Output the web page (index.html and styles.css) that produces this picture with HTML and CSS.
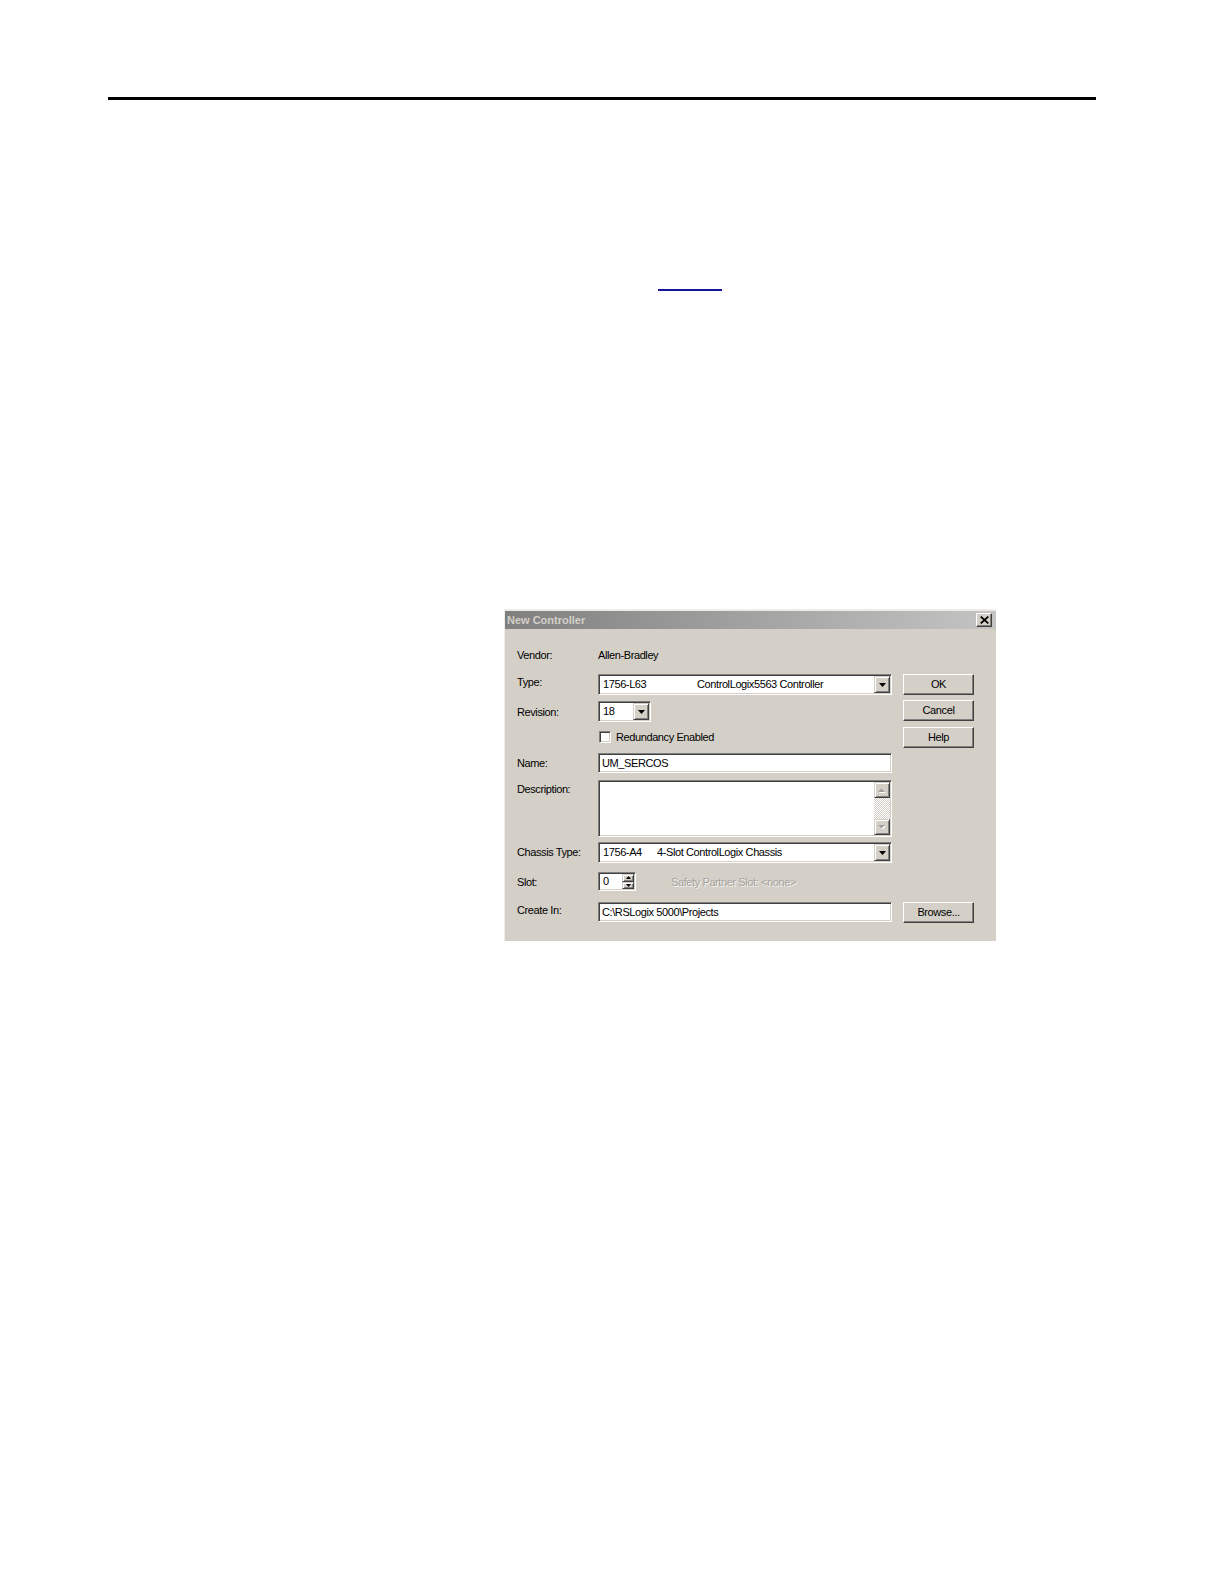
FILE: index.html
```html
<!DOCTYPE html>
<html lang="en">
<head>
<meta charset="utf-8">
<title>New Controller</title>
<link rel="stylesheet" href="styles.css">
</head>
<body>
<div class="page">
  <div class="rule"></div>
  <div class="link-line"></div>
  <div class="dialog">
    <div class="titlebar">
      <span class="title">New Controller</span>
      <span class="close btn-bevel"><svg width="9" height="8" viewBox="0 0 9 8"><path d="M0.7 0.6L8.3 7.4M8.3 0.6L0.7 7.4" stroke="#000" stroke-width="1.8" fill="none"/></svg></span>
    </div>
    <div class="form">
      <div class="label r1">Vendor:</div>
      <div class="value r1">Allen-Bradley</div>

      <div class="label r2 lbl-type">Type:</div>
      <div class="combo sunken r2">
        <span class="ctext"><span class="cat cat-type">1756-L63</span>ControlLogix5563 Controller</span>
        <span class="dd raised"><svg width="7" height="4" viewBox="0 0 7 4"><polygon points="0,0 7,0 3.5,4" fill="#000"/></svg></span>
      </div>
      <div class="btn-stack">
        <div class="btn btn-bevel">OK</div>
        <div class="btn btn-bevel btn-cancel">Cancel</div>
        <div class="btn btn-bevel btn-help">Help</div>
      </div>

      <div class="label r3 lbl-rev">Revision:</div>
      <div class="combo combo-small sunken r3">
        <span class="ctext">18</span>
        <span class="dd raised"><svg width="7" height="4" viewBox="0 0 7 4"><polygon points="0,0 7,0 3.5,4" fill="#000"/></svg></span>
      </div>

      <div class="check-row r4">
        <span class="checkbox"></span>
        <span class="check-label">Redundancy Enabled</span>
      </div>

      <div class="label r5">Name:</div>
      <div class="field sunken r5">UM_SERCOS</div>

      <div class="label r6 lbl-desc">Description:</div>
      <div class="textarea sunken r6">
        <div class="scrollbar">
          <span class="sb-btn raised"><svg width="8" height="5" viewBox="0 0 8 5"><polygon points="1,5 8,5 4.5,1.5" fill="#fff"/><polygon points="0,4 7,4 3.5,0.5" fill="#a0a0a0"/></svg></span>
          <span class="sb-track"></span>
          <span class="sb-btn raised"><svg width="8" height="5" viewBox="0 0 8 5"><polygon points="1,1 8,1 4.5,4.5" fill="#fff"/><polygon points="0,0 7,0 3.5,3.5" fill="#a0a0a0"/></svg></span>
        </div>
      </div>

      <div class="label r7 lbl-chassis">Chassis Type:</div>
      <div class="combo sunken r7">
        <span class="ctext"><span class="cat cat-chassis">1756-A4</span>4-Slot ControlLogix Chassis</span>
        <span class="dd raised"><svg width="7" height="4" viewBox="0 0 7 4"><polygon points="0,0 7,0 3.5,4" fill="#000"/></svg></span>
      </div>

      <div class="label r8 lbl-slot">Slot:</div>
      <div class="slot-row r8">
        <div class="spin sunken">
          <span class="spin-val">0</span>
          <span class="spin-btns">
            <span class="spin-btn raised"><svg width="5" height="3" viewBox="0 0 5 3"><polygon points="0,3 5,3 2.5,0" fill="#000"/></svg></span>
            <span class="spin-btn raised"><svg width="5" height="3" viewBox="0 0 5 3"><polygon points="0,0 5,0 2.5,3" fill="#000"/></svg></span>
          </span>
        </div>
        <span class="disabled">Safety Partner Slot: &lt;none&gt;</span>
      </div>

      <div class="label r9 lbl-create">Create In:</div>
      <div class="field sunken r9">C:\RSLogix 5000\Projects</div>
      <div class="btn btn-bevel btn-browse">Browse...</div>
    </div>
  </div>
</div>
</body>
</html>
```

FILE: styles.css
```css
* { box-sizing: border-box; }
html, body { margin: 0; padding: 0; background: #fff; }
body {
  font-family: "Liberation Sans", Arial, sans-serif;
  font-size: 11px;
  letter-spacing: -0.4px;
  color: #000;
}
.page { width: 1224px; min-height: 1584px; padding-top: 97px; overflow: hidden; }

.rule { margin-left: 108px; width: 988px; height: 3px; background: #000; }
.link-line { margin: 189px 0 0 658px; width: 64px; height: 2px; background: #14149c; }

.dialog {
  margin: 318px 0 0 504px;
  width: 492px;
  height: 332px;
  background: #d4d0c8;
  border-top: 2px solid #eeece7;
  border-left: 1px solid #eeece7;
}
.titlebar {
  height: 18px;
  display: flex;
  align-items: center;
  justify-content: space-between;
  padding: 0 4px 0 2px;
  background: linear-gradient(to right, #808080, #c4c4c4);
}
.title {
  font-family: "Liberation Sans", Arial, sans-serif;
  font-weight: bold;
  font-size: 11px;
  letter-spacing: 0;
  line-height: 18px;
  color: #d4d0c8;
}
.close {
  width: 16px;
  height: 14px;
  display: flex;
  align-items: center;
  justify-content: center;
}

.raised {
  background: #d4d0c8;
  border: 1px solid;
  border-color: #d4d0c8 #404040 #404040 #d4d0c8;
  box-shadow: inset 1px 1px 0 #fff, inset -1px -1px 0 #808080;
}
.btn-bevel {
  background: #d4d0c8;
  border: 1px solid;
  border-color: #fff #404040 #404040 #fff;
  box-shadow: inset -1px -1px 0 #808080;
}
.sunken {
  background: #fff;
  border: 1px solid;
  border-color: #808080 #fff #fff #808080;
  box-shadow: inset 1px 1px 0 #404040, inset -1px -1px 0 #d4d0c8;
}

.form {
  display: grid;
  grid-template-columns: 81px 294px 11px 71px;
  grid-template-rows: 26px 27px 28px 24px 27px 62px 30px 30px 21px;
  padding: 19px 21px 18px 12px;
}
.r1 { grid-row: 1; }
.r2 { grid-row: 2; }
.r3 { grid-row: 3; }
.r4 { grid-row: 4; }
.r5 { grid-row: 5; }
.r6 { grid-row: 6; }
.r7 { grid-row: 7; }
.r8 { grid-row: 8; }
.r9 { grid-row: 9; }

.label { grid-column: 1; line-height: 14px; padding-top: 3px; white-space: nowrap; }
.r1.label { padding-top: 0; }
.lbl-type { padding-top: 1px; }
.lbl-rev { padding-top: 4px; }
.lbl-desc { padding-top: 2px; }
.lbl-chassis { padding-top: 3px; }
.lbl-slot { padding-top: 3px; }
.lbl-create { padding-top: 1px; }
.value { grid-column: 2; line-height: 14px; }

.combo {
  grid-column: 2;
  height: 21px;
  display: flex;
  padding: 1px;
  align-self: start;
}
.combo-small { width: 53px; }
.ctext {
  flex: 1;
  padding-left: 3px;
  line-height: 17px;
  white-space: nowrap;
  overflow: hidden;
}
.cat { display: inline-block; }
.cat-type { width: 94px; }
.cat-chassis { width: 54px; }
.dd {
  width: 16px;
  display: flex;
  align-items: center;
  justify-content: center;
  padding-top: 1px;
}

.btn-stack {
  grid-column: 4;
  grid-row: 2 / 5;
  display: flex;
  flex-direction: column;
}
.btn {
  width: 71px;
  height: 21px;
  line-height: 19px;
  text-align: center;
}
.btn-cancel { margin-top: 5px; }
.btn-help { margin-top: 6px; }
.btn-browse { grid-column: 4; grid-row: 9; }

.check-row {
  grid-column: 2;
  display: flex;
  align-items: center;
  align-self: start;
  margin-top: 2px;
  height: 12px;
}
.checkbox {
  width: 12px;
  height: 12px;
  margin-left: 1px;
  background: #fff;
  border: 1px solid;
  border-color: #808080 #fff #fff #808080;
  box-shadow: inset 1px 1px 0 #404040, inset -1px -1px 0 #d4d0c8;
}
.check-label { margin-left: 5px; line-height: 12px; }

.field {
  grid-column: 2;
  height: 20px;
  padding: 1px 3px;
  line-height: 16px;
  align-self: start;
  white-space: nowrap;
}

.textarea {
  grid-column: 2;
  height: 57px;
  padding: 1px;
  display: flex;
  justify-content: flex-end;
  align-self: start;
}
.scrollbar { width: 16px; display: flex; flex-direction: column; }
.sb-btn {
  height: 16px;
  display: flex;
  align-items: center;
  justify-content: center;
}
.sb-track {
  flex: 1;
  background-color: #fff;
  background-image: repeating-conic-gradient(#d4d0c8 0 25%, #fff 0 50%);
  background-size: 2px 2px;
}

.slot-row {
  grid-column: 2 / 4;
  display: flex;
  align-items: flex-start;
}
.spin {
  width: 38px;
  height: 19px;
  padding: 1px;
  display: flex;
}
.spin-val { flex: 1; padding-left: 3px; line-height: 15px; }
.spin-btns { width: 12px; display: flex; flex-direction: column; }
.spin-btn {
  flex: 1;
  display: flex;
  align-items: center;
  justify-content: center;
}
.disabled {
  margin-left: 35px;
  padding-top: 3px;
  line-height: 14px;
  color: #a4a29d;
  text-shadow: 1px 1px 0 #f4f3f0;
  white-space: nowrap;
}
```
